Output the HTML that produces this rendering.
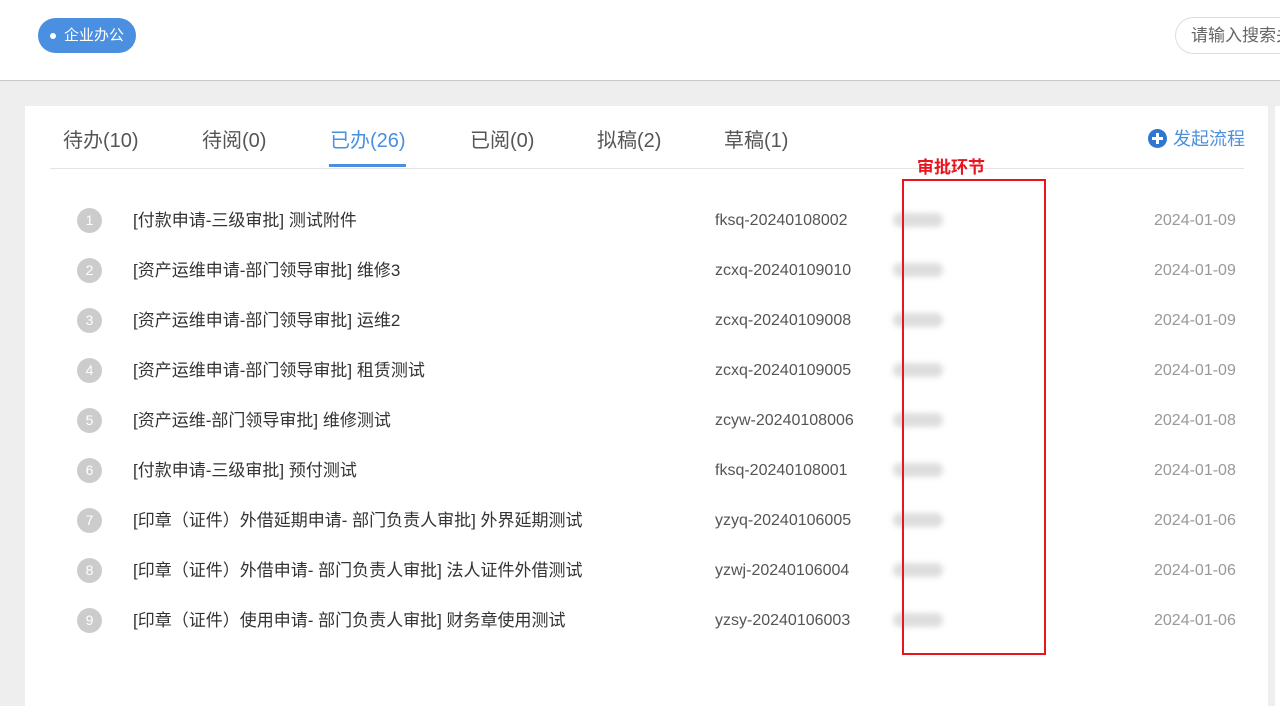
<!DOCTYPE html>
<html><head><meta charset="utf-8"><style>
*{margin:0;padding:0;box-sizing:border-box}
body{width:1280px;height:692px;overflow:hidden;background:#eeeeee;font-family:"Liberation Sans","Noto Sans CJK SC",sans-serif;position:relative}
.hdr{position:absolute;left:0;top:0;width:1280px;height:81px;background:#fff;border-bottom:1px solid #c8c8c8}
.pill{position:absolute;left:38px;top:18px;width:98px;height:35px;border-radius:18px;background:#4a8fe0;color:#fff;font-size:15px;line-height:35px;padding-left:26px}
.pill:before{content:"";position:absolute;left:12px;top:15px;width:6px;height:6px;border-radius:50%;background:#fff}
.search{position:absolute;left:1175px;top:17px;width:140px;height:37px;border:1px solid #ddd;border-radius:19px;color:#666;font-size:17px;line-height:35px;padding-left:15px;white-space:nowrap}
.card{position:absolute;left:25px;top:106px;width:1243px;height:600px;background:#fff}
.card2{position:absolute;left:1275px;top:106px;width:10px;height:600px;background:#fff}
.tabs{position:absolute;left:25px;top:0;width:1194px;height:63px;border-bottom:1px solid #e4e4e4}
.tab{position:absolute;top:18px;font-size:20px;color:#555}
.tab.on{color:#4a8fe0}
.ul{position:absolute;left:279px;top:58px;width:77px;height:3px;background:#4a8fe0}
.new{position:absolute;left:1123px;top:19px;font-size:18px;color:#4a8fe0}
.new i{display:inline-block;width:19px;height:19px;border-radius:50%;background:#2f76d2;vertical-align:-3px;margin-right:6px;position:relative}
.new i:before{content:"";position:absolute;left:4px;top:8px;width:11px;height:3px;background:#fff}
.new i:after{content:"";position:absolute;left:8px;top:4px;width:3px;height:11px;background:#fff}
.row{position:absolute;left:0;width:1243px;height:30px;font-size:17px;color:#333}
.num{position:absolute;left:52px;top:3px;width:25px;height:25px;border-radius:50%;background:#ccc;color:#fff;font-size:14px;text-align:center;line-height:25px}
.t{position:absolute;left:108px;top:1px}
.c{position:absolute;left:690px;top:7px;font-size:16px;color:#555}
.b{position:absolute;left:868px;top:8px;width:50px;height:14px;background:#ddd;border-radius:7px;filter:blur(3px)}
.d{position:absolute;left:1129px;top:7px;font-size:16px;color:#999}
.lab{position:absolute;left:917px;top:153px;color:#e8141e;font-weight:bold;font-size:17px}
.box{position:absolute;left:902px;top:179px;width:144px;height:476px;border:2px solid #e8141e}
</style></head><body>
<div class="hdr"><div class="pill">企业办公</div><div class="search">请输入搜索关键字</div></div>
<div class="card">
<div class="tabs">
<div class="tab" style="left:13px">待办(10)</div>
<div class="tab" style="left:152px">待阅(0)</div>
<div class="tab on" style="left:280px">已办(26)</div>
<div class="tab" style="left:420px">已阅(0)</div>
<div class="tab" style="left:547px">拟稿(2)</div>
<div class="tab" style="left:674px">草稿(1)</div>
<div class="ul"></div>
</div>
<div class="new"><i></i>发起流程</div>
<div class="row" style="top:99px"><div class="num">1</div><div class="t">[付款申请-三级审批] 测试附件</div><div class="c">fksq-20240108002</div><div class="b"></div><div class="d">2024-01-09</div></div>
<div class="row" style="top:149px"><div class="num">2</div><div class="t">[资产运维申请-部门领导审批] 维修3</div><div class="c">zcxq-20240109010</div><div class="b"></div><div class="d">2024-01-09</div></div>
<div class="row" style="top:199px"><div class="num">3</div><div class="t">[资产运维申请-部门领导审批] 运维2</div><div class="c">zcxq-20240109008</div><div class="b"></div><div class="d">2024-01-09</div></div>
<div class="row" style="top:249px"><div class="num">4</div><div class="t">[资产运维申请-部门领导审批] 租赁测试</div><div class="c">zcxq-20240109005</div><div class="b"></div><div class="d">2024-01-09</div></div>
<div class="row" style="top:299px"><div class="num">5</div><div class="t">[资产运维-部门领导审批] 维修测试</div><div class="c">zcyw-20240108006</div><div class="b"></div><div class="d">2024-01-08</div></div>
<div class="row" style="top:349px"><div class="num">6</div><div class="t">[付款申请-三级审批] 预付测试</div><div class="c">fksq-20240108001</div><div class="b"></div><div class="d">2024-01-08</div></div>
<div class="row" style="top:399px"><div class="num">7</div><div class="t">[印章（证件）外借延期申请- 部门负责人审批] 外界延期测试</div><div class="c">yzyq-20240106005</div><div class="b"></div><div class="d">2024-01-06</div></div>
<div class="row" style="top:449px"><div class="num">8</div><div class="t">[印章（证件）外借申请- 部门负责人审批] 法人证件外借测试</div><div class="c">yzwj-20240106004</div><div class="b"></div><div class="d">2024-01-06</div></div>
<div class="row" style="top:499px"><div class="num">9</div><div class="t">[印章（证件）使用申请- 部门负责人审批] 财务章使用测试</div><div class="c">yzsy-20240106003</div><div class="b"></div><div class="d">2024-01-06</div></div>
</div>
<div class="card2"></div>
<div class="lab">审批环节</div>
<div class="box"></div>
</body></html>
